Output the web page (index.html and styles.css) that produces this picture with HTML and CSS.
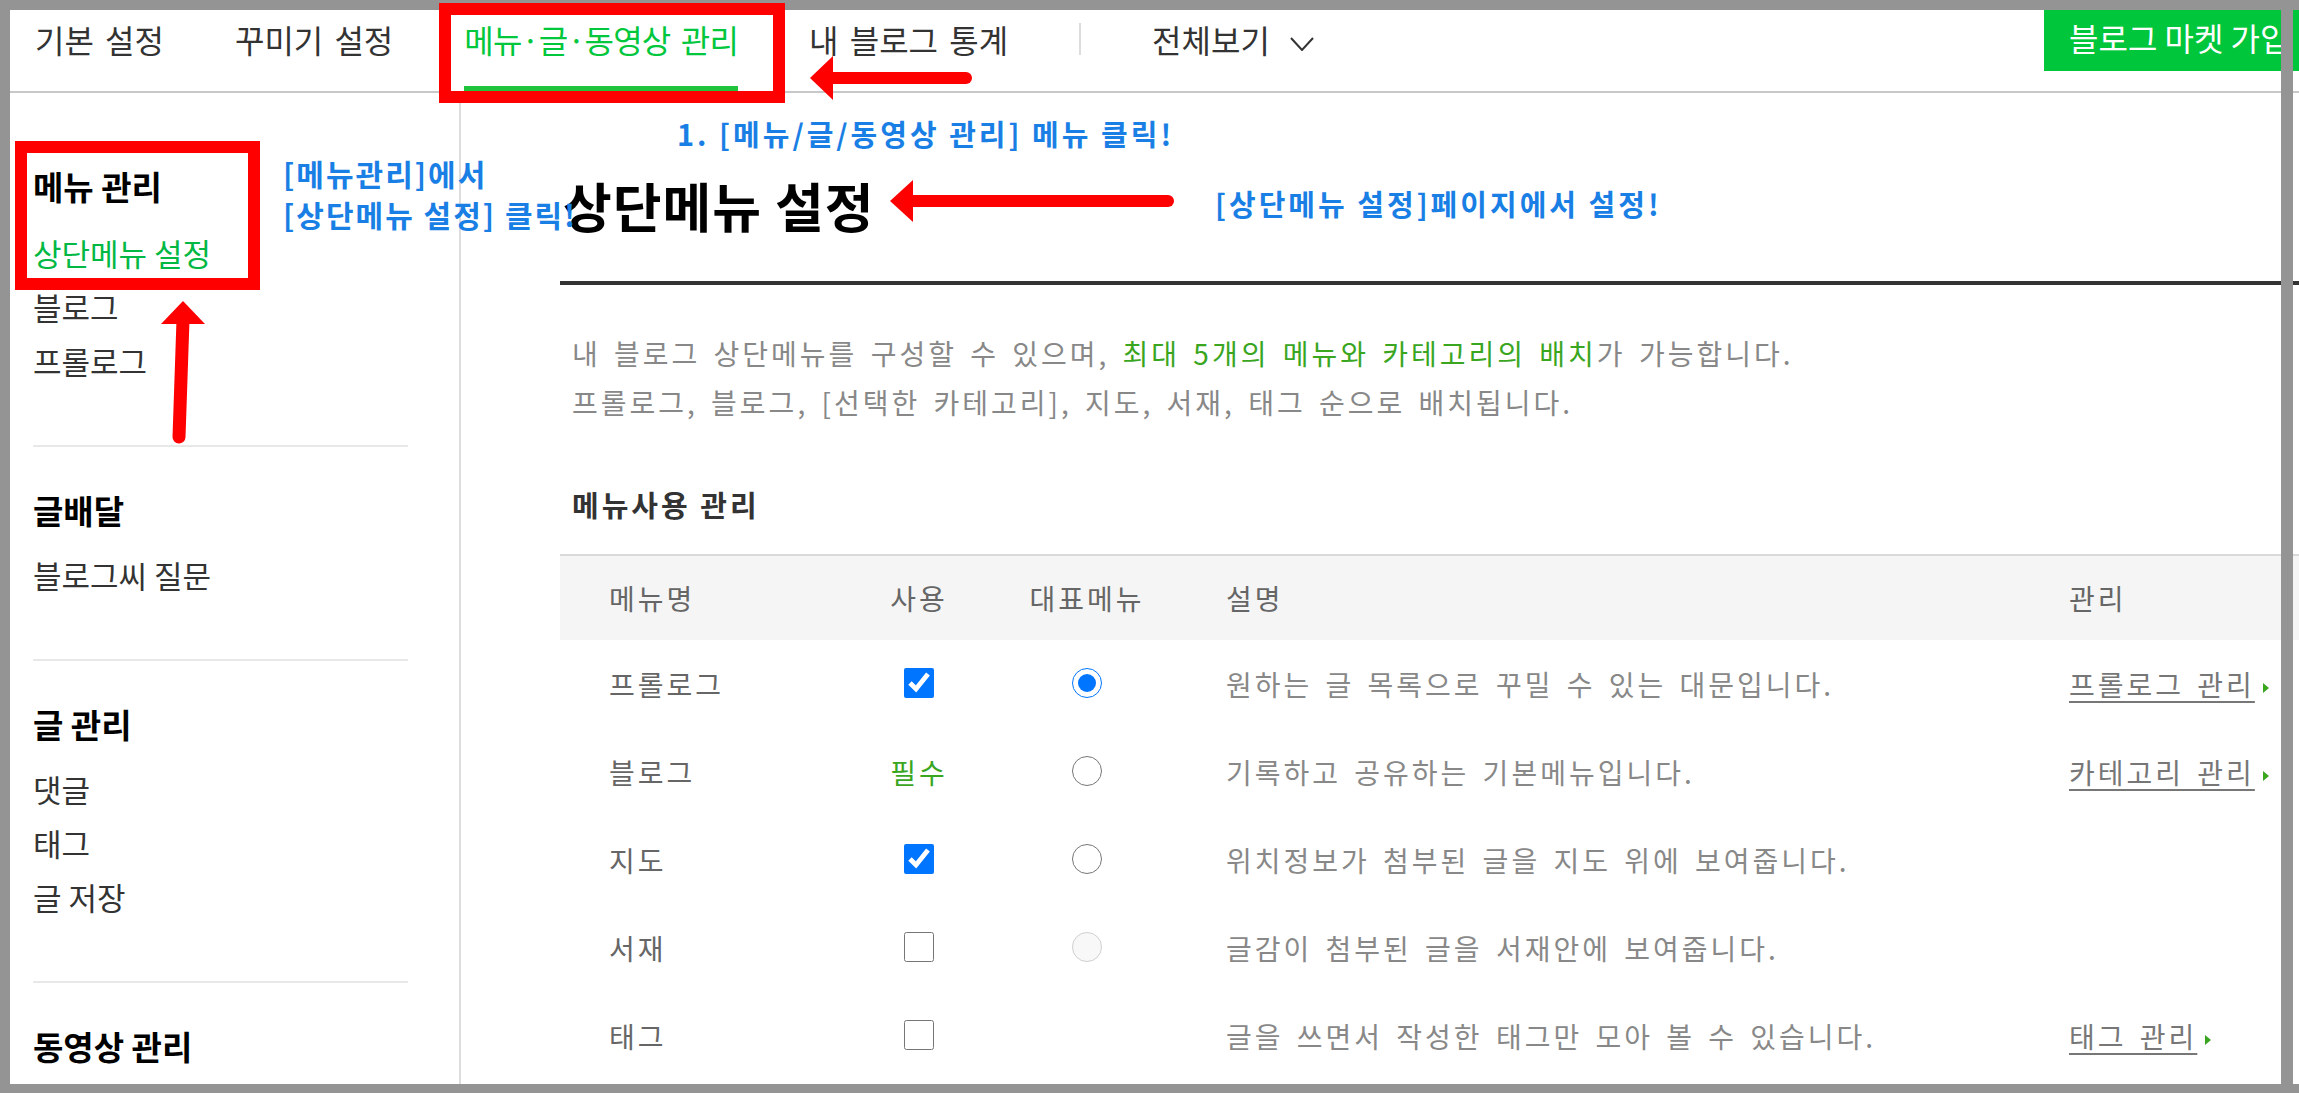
FILE: index.html
```html
<!DOCTYPE html>
<html>
    <head>
        <meta charset="utf-8">
        <link rel="stylesheet" href="styles.css">
        <title>블로그 관리 - 상단메뉴 설정</title>
    </head>
    <body>
        <div class="page">
            <div class="topnav">
                <a class="tab">기본 설정</a>
                <a class="tab">꾸미기 설정</a>
                <a class="tab on">메뉴·글·동영상 관리</a>
                <a class="tab">내 블로그 통계</a>
                <span class="sep"></span>
                <a class="tab">전체보기<svg class="chev" width="24" height="14" viewBox="0 0 24 14"><polyline points="1,1 12,13 23,1" fill="none" stroke="#333" stroke-width="2"/></svg></a>
                <a class="market">블로그 마켓 가입</a>
            </div>
            <div class="wrap">
                <div class="side">
                    <div class="grp first">
                        <h3>메뉴 관리</h3>
                        <a class="item cur">상단메뉴 설정</a>
                        <a class="item">블로그</a>
                        <a class="item">프롤로그</a>
                    </div>
                    <div class="grp">
                        <h3>글배달</h3>
                        <a class="item">블로그씨 질문</a>
                    </div>
                    <div class="grp">
                        <h3>글 관리</h3>
                        <a class="item">댓글</a>
                        <a class="item">태그</a>
                        <a class="item">글 저장</a>
                    </div>
                    <div class="grp">
                        <h3>동영상 관리</h3>
                    </div>
                </div>
                <div class="main">
                    <div class="title-wrap">
                        <h2 class="title">상단메뉴 설정</h2>
                    </div>
                    <p class="desc">내 블로그 상단메뉴를 구성할 수 있으며, <span class="hl">최대 5개의 메뉴와 카테고리의 배치</span>가 가능합니다.<br>프롤로그, 블로그, [선택한 카테고리], 지도, 서재, 태그 순으로 배치됩니다.</p>
                    <h4 class="sub">메뉴사용 관리</h4>
                    <table class="menus">
                        <colgroup>
                            <col style="width: 290px">
                            <col style="width: 138px">
                            <col style="width: 198px">
                            <col style="width: 843px">
                            <col>
                        </colgroup>
                        <thead>
                            <tr>
                                <th class="c-name">메뉴명</th>
                                <th class="c-mid">사용</th>
                                <th class="c-mid">대표메뉴</th>
                                <th class="c-desc">설명</th>
                                <th class="c-link">관리</th>
                            </tr>
                        </thead>
                        <tbody>
                            <tr>
                                <td class="c-name">프롤로그</td>
                                <td class="c-mid"><input type="checkbox" checked></td>
                                <td class="c-mid"><input type="radio" name="rep" checked></td>
                                <td class="c-desc">원하는 글 목록으로 꾸밀 수 있는 대문입니다.</td>
                                <td class="c-link"><a class="lnk">프롤로그 관리</a><span class="tri"></span></td>
                            </tr>
                            <tr>
                                <td class="c-name">블로그</td>
                                <td class="c-mid"><span class="must">필수</span></td>
                                <td class="c-mid"><input type="radio" name="rep"></td>
                                <td class="c-desc">기록하고 공유하는 기본메뉴입니다.</td>
                                <td class="c-link"><a class="lnk">카테고리 관리</a><span class="tri"></span></td>
                            </tr>
                            <tr>
                                <td class="c-name">지도</td>
                                <td class="c-mid"><input type="checkbox" checked></td>
                                <td class="c-mid"><input type="radio" name="rep"></td>
                                <td class="c-desc">위치정보가 첨부된 글을 지도 위에 보여줍니다.</td>
                                <td class="c-link"></td>
                            </tr>
                            <tr>
                                <td class="c-name">서재</td>
                                <td class="c-mid"><input type="checkbox"></td>
                                <td class="c-mid"><input type="radio" name="rep" disabled></td>
                                <td class="c-desc">글감이 첨부된 글을 서재안에 보여줍니다.</td>
                                <td class="c-link"></td>
                            </tr>
                            <tr>
                                <td class="c-name">태그</td>
                                <td class="c-mid"><input type="checkbox"></td>
                                <td class="c-mid"></td>
                                <td class="c-desc">글을 쓰면서 작성한 태그만 모아 볼 수 있습니다.</td>
                                <td class="c-link"><a class="lnk">태그 관리</a><span class="tri"></span></td>
                            </tr>
                        </tbody>
                    </table>
                </div>
            </div>
        </div>

        <!-- screenshot annotations -->
        <div class="frame-r"></div>
        <div class="mark mark-nav"></div>
        <div class="mark mark-side"></div>
        <svg class="arrows" width="2299" height="1093" viewBox="0 0 2299 1093">
            <line x1="828" y1="78" x2="966" y2="78" stroke="#f00" stroke-width="12" stroke-linecap="round"/>
            <polygon points="810,78 833,56 833,100" fill="#f00"/>
            <line x1="910" y1="201" x2="1168" y2="201" stroke="#f00" stroke-width="12" stroke-linecap="round"/>
            <polygon points="890,201 913,180 913,222" fill="#f00"/>
            <line x1="183" y1="320" x2="179" y2="437" stroke="#f00" stroke-width="13" stroke-linecap="round"/>
            <polygon points="183,301 161,324 205,324" fill="#f00"/>
        </svg>
        <p class="note note-nav">1. [메뉴/글/동영상 관리] 메뉴 클릭!</p>
        <p class="note note-side">[메뉴관리]에서<br>[상단메뉴 설정] 클릭!</p>
        <p class="note note-title">[상단메뉴 설정]페이지에서 설정!</p>
    </body>
</html>
```

FILE: styles.css
```css
body {
    margin: 0;
    background-color: #949494;
    font-family: "Noto Sans CJK KR", sans-serif;
}
a {
    text-decoration: none;
}
.page {
    margin: 10px 0 0 10px;
    height: 1074px;
    background-color: white;
    overflow: hidden;
}

/* top tabs */
.topnav {
    display: flex;
    gap: 71px;
    height: 81px;
    padding-left: 25px;
    border-bottom: 2px solid #c8c8c8;
}
.tab {
    display: block;
    box-sizing: border-box;
    height: 81px;
    padding-top: 9px;
    border-bottom: 5px solid transparent;
    font-size: 32px;
    line-height: 40px;
    word-spacing: 4px;
    color: #333;
    white-space: nowrap;
}
.tab.on {
    color: #00c73c;
    letter-spacing: -0.8px;
    border-bottom-color: #1fc43c;
}
.sep {
    width: 2px;
    height: 32px;
    margin-top: 13px;
    background-color: #ddd;
}
.chev {
    margin-left: 20px;
    vertical-align: 2px;
}
.market {
    margin-left: auto;
    width: 255px;
    height: 61px;
    box-sizing: border-box;
    padding-left: 25px;
    background-color: #00c63c;
    color: white;
    font-size: 32px;
    line-height: 55px;
    white-space: nowrap;
    overflow: hidden;
}

/* left menu */
.wrap {
    display: flex;
    height: 991px;
}
.side {
    flex: none;
    width: 451px;
    box-sizing: border-box;
    padding: 0 51px 0 23px;
    border-right: 2px solid #ddd;
}
.grp {
    border-top: 2px solid #e8e8e8;
    padding: 36px 0 57px;
}
.grp.first {
    border-top: 0;
    padding-top: 66px;
}
.grp h3 {
    margin: 0 0 11px;
    font-size: 33px;
    line-height: 54px;
    color: #000;
}
.grp.first h3 {
    margin-bottom: 13px;
}
.item {
    display: block;
    font-size: 31px;
    line-height: 54px;
    color: #333;
}
.item.cur {
    color: #00b843;
}

/* content */
.main {
    flex: 1;
    min-width: 0;
    padding-left: 99px;
}
.title-wrap {
    padding: 82px 0 46px 3px;
    border-bottom: 4px solid #333;
}
.title {
    margin: 0;
    font-size: 53px;
    line-height: 60px;
    letter-spacing: 1px;
    color: #000;
}
.desc {
    margin: 44px 0 0;
    padding-left: 12px;
    font-size: 28px;
    line-height: 49px;
    letter-spacing: 3px;
    word-spacing: 4px;
    color: #888;
}
.hl {
    color: #3aa61f;
}
.sub {
    margin: 57px 0 0;
    padding-left: 12px;
    font-size: 29px;
    line-height: 40px;
    letter-spacing: 3px;
    color: #333;
}
.menus {
    margin-top: 30px;
    width: 100%;
    table-layout: fixed;
    border-collapse: collapse;
    border-top: 2px solid #d9d9d9;
}
.menus th {
    height: 84px;
    padding: 0;
    background-color: #f5f5f5;
    font-weight: normal;
    font-size: 28px;
    letter-spacing: 3px;
    color: #666;
}
.menus td {
    height: 88px;
    padding: 0;
    font-size: 28px;
    letter-spacing: 3px;
    color: #666;
}
.c-name {
    text-align: left;
    padding-left: 49px !important;
}
.c-mid {
    text-align: center;
}
.c-desc {
    text-align: left;
    padding-left: 40px !important;
    word-spacing: 4px;
}
.menus td.c-desc {
    color: #888;
}
.c-link {
    text-align: left;
    padding-left: 40px !important;
    white-space: nowrap;
}
.menus input {
    width: 30px;
    height: 30px;
    margin: 0 0 8px;
    vertical-align: middle;
}
.must {
    color: #3aa61f;
}
.lnk {
    color: #777;
    word-spacing: 4px;
    text-decoration: underline;
    text-underline-offset: 5px;
    text-decoration-thickness: 2px;
}
.tri {
    display: inline-block;
    width: 0;
    height: 0;
    margin-left: 8px;
    border-left: 6px solid #3aa61f;
    border-top: 5px solid transparent;
    border-bottom: 5px solid transparent;
    vertical-align: middle;
}

/* annotations drawn over the screenshot */
.frame-r {
    position: absolute;
    left: 2281px;
    top: 0;
    width: 12px;
    height: 1093px;
    background-color: #949494;
}
.mark {
    position: absolute;
    box-sizing: border-box;
    border: 12px solid #f00;
}
.mark-nav {
    left: 439px;
    top: 3px;
    width: 346px;
    height: 100px;
}
.mark-side {
    left: 15px;
    top: 141px;
    width: 245px;
    height: 149px;
}
.arrows {
    position: absolute;
    left: 0;
    top: 0;
}
.note {
    position: absolute;
    margin: 0;
    color: #1a7fe5;
    font-weight: bold;
    white-space: nowrap;
}
.note-nav {
    left: 677px;
    top: 115px;
    font-size: 29px;
    line-height: 36px;
    letter-spacing: 3px;
}
.note-side {
    left: 283px;
    top: 153px;
    font-size: 30px;
    line-height: 41px;
    letter-spacing: 2px;
}
.note-title {
    left: 1215px;
    top: 185px;
    font-size: 29px;
    line-height: 36px;
    letter-spacing: 3px;
}
```
